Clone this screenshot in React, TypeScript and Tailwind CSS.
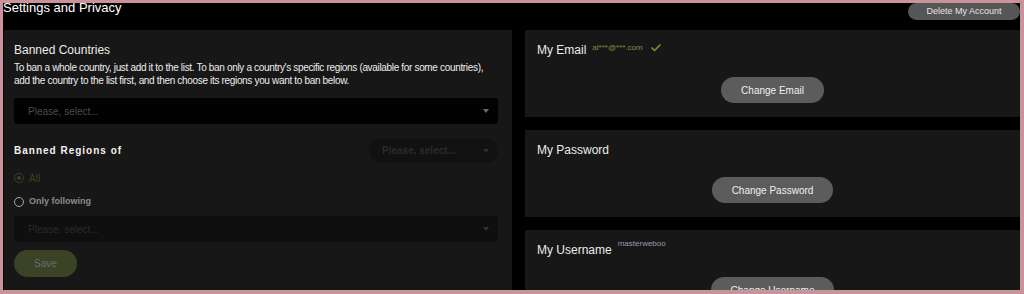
import React from "react";
import { Check } from "lucide-react";

const Caret = ({ className = "" }: { className?: string }) => (
  <svg width="6" height="4" viewBox="0 0 6 4" className={className}>
    <path d="M0 0 L6 0 L3 4 Z" fill="currentColor" />
  </svg>
);

const AccountCard = ({
  title,
  extra,
  button,
}: {
  title: string;
  extra?: React.ReactNode;
  button: string;
}) => (
  <section className="bg-[#171717] px-3 pt-[13px] pb-[14px] shrink-0">
    <div className="flex items-start h-[14px]">
      <h3 className="text-[12px] leading-[14px] text-[#ececec]">{title}</h3>
      {extra}
    </div>
    <div className="mt-[20px] flex justify-center">
      <button className="h-[26px] rounded-full bg-[#5c5c5c] px-5 text-[10px] text-[#f0f0f0]">
        {button}
      </button>
    </div>
  </section>
);

const App = () => {
  return (
    <div
      className="w-[1024px] h-[294px] overflow-hidden bg-[#c8939a] pt-[3px] pl-[3px] pr-[4px] pb-[4px]"
      style={{ fontFamily: '"Liberation Sans", Arial, sans-serif' }}
    >
      <div className="h-full bg-black overflow-hidden flex flex-col">
        {/* Header */}
        <div className="h-[27px] shrink-0 flex justify-between items-start">
          <h1 className="text-[13px] leading-[13px] -mt-[2px] text-white whitespace-nowrap">Settings and Privacy</h1>
          <button className="h-[17px] w-[112px] rounded-full bg-[#565656] text-[9px] text-[#e4e4e4]">
            Delete My Account
          </button>
        </div>

        <div className="flex-1 flex gap-[13px] min-h-0">
          {/* Banned countries */}
          <section className="w-[508px] ml-px bg-[#171717] pl-[10px] pr-[14px] pt-[13px] shrink-0">
            <h2 className="text-[12px] leading-[14px] text-[#ececec]">Banned Countries</h2>
            <p className="mt-[4px] text-[10px] leading-[13px] tracking-[-0.33px] text-[#ededed] whitespace-nowrap">
              To ban a whole country, just add it to the list. To ban only a country's specific regions (available for some countries),
              <br />
              add the country to the list first, and then choose its regions you want to ban below.
            </p>

            <div className="mt-[11px] h-[26px] rounded-[3px] bg-[#020202] flex items-center justify-between pl-[14px] pr-[9px]">
              <span className="text-[10px] text-[#4a4a4a]">Please, select...</span>
              <Caret className="text-[#6a6a6a]" />
            </div>

            <div className="mt-[14px] h-[25px] flex items-center justify-between">
              <h2 className="text-[10px] font-bold tracking-[1px] text-[#f2f2f2]">Banned Regions of</h2>
              <div className="w-[129px] h-[25px] rounded-full bg-[#111111] flex items-center justify-between pl-[13px] pr-[9px]">
                <span className="text-[10px] font-bold text-[#2b2b2b]">Please, select...</span>
                <Caret className="text-[#2e2e2e]" />
              </div>
            </div>

            <label className="mt-[7px] h-[16px] flex items-center gap-[5px]">
              <span className="w-[10px] h-[10px] rounded-full border border-[#3a4222] flex items-center justify-center">
                <span className="w-[4px] h-[4px] rounded-full bg-[#3a4222]" />
              </span>
              <span className="text-[10px] text-[#3b4323]">All</span>
            </label>
            <label className="mt-[8px] h-[16px] flex items-center gap-[5px]">
              <span className="w-[10px] h-[10px] rounded-full border-[1.5px] border-[#a8a8a8]" />
              <span className="text-[9px] font-bold text-[#8c8c8c]">Only following</span>
            </label>

            <div className="mt-[6px] h-[26px] rounded-[3px] bg-[#0f0f0f] flex items-center justify-between pl-[14px] pr-[9px]">
              <span className="text-[10px] text-[#2a2a2a]">Please, select...</span>
              <Caret className="text-[#333333]" />
            </div>

            <button className="mt-[8px] h-[27px] w-[63px] rounded-full bg-[#3a4326] text-[10px] text-[#6b6b6b]">
              Save
            </button>
          </section>

          {/* Account cards */}
          <div className="flex-1 flex flex-col gap-[13px] min-w-0">
            <AccountCard
              title="My Email"
              button="Change Email"
              extra={
                <div className="flex items-center ml-[6px] -mt-[1px]">
                  <span className="text-[8px] leading-[10px] text-[#7f8f40]">al***@***.com</span>
                  <Check className="ml-[7px] w-[12px] h-[12px] text-[#6f9236]" strokeWidth={3.5} />
                </div>
              }
            />
            <AccountCard title="My Password" button="Change Password" />
            <AccountCard
              title="My Username"
              button="Change Username"
              extra={
                <span className="ml-[6px] -mt-[4px] text-[8px] leading-[10px] text-[#9f95b8]">masterweboo</span>
              }
            />
          </div>
        </div>
      </div>
    </div>
  );
};

export default App;
